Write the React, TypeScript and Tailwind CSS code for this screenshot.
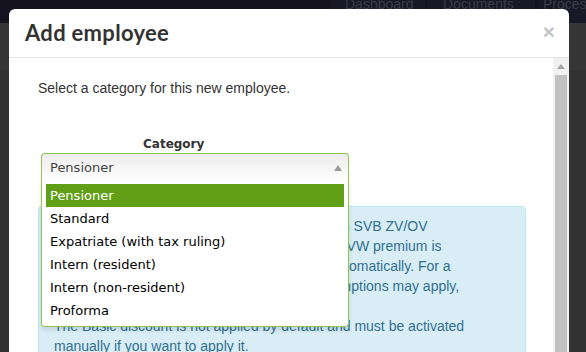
import React from 'react';

const options = [
  'Pensioner',
  'Standard',
  'Expatriate (with tax ruling)',
  'Intern (resident)',
  'Intern (non-resident)',
  'Proforma',
];

function Backdrop() {
  return (
    <div className="absolute inset-0 flex flex-col">
      <div className="h-[23px] bg-[#14131f] flex items-start justify-end overflow-hidden">
        <div className="flex h-full text-[14px] leading-[14px] text-[#3c3b4b] font-['Liberation_Sans',sans-serif]">
          <div className="w-[95px] pl-[15px] bg-[#191826] mr-[3px]"><span className="block -mt-[3px]">Dashboard</span></div>
          <div className="w-[107px] pl-[15px] bg-[#191826] mr-[3px]"><span className="block -mt-[3px]">Documents</span></div>
          <div className="w-[48px] pl-[5px] bg-[#191826] whitespace-nowrap overflow-hidden"><span className="block -mt-[3px]">Process</span></div>
        </div>
      </div>
      <div className="h-[47px] bg-[#363636]" />
      <div className="flex-1 bg-[#323232]" />
    </div>
  );
}

function CategorySelect() {
  return (
    <div className="relative ml-[3px] w-[308px]">
      <div className="h-[28px] border border-[#8fc651] border-b-0 rounded-t-[4px] bg-gradient-to-b from-[#ececec] to-white flex items-center justify-between pl-[8px] pr-[6px] text-[13px] text-[#444]">
        <span>Pensioner</span>
        <svg width="8" height="6" viewBox="0 0 8 6">
          <path d="M0 6 L4 0 L8 6 Z" fill="#999" />
        </svg>
      </div>
      <div className="absolute left-0 top-[27px] w-[308px] bg-white border border-[#8fc651] border-t-0 rounded-b-[4px] px-[4px] py-[4px] z-10 shadow-[0_3px_4px_rgba(0,0,0,0.1)]">
        {options.map((o, i) => (
          <div
            key={o}
            className={
              i === 0
                ? 'h-[23px] flex items-center px-[4px] bg-[#619f17] text-white'
                : 'h-[23px] flex items-center px-[4px] text-black'
            }
          >
            {o}
          </div>
        ))}
      </div>
    </div>
  );
}

export default function App() {
  return (
    <div className="relative w-[586px] h-[352px] overflow-hidden bg-[#333]">
      <Backdrop />
      <div className="absolute left-[9px] top-[9px] w-[560px] h-[360px] bg-white rounded-t-[6px] flex flex-col">
        <div className="h-[49px] shrink-0 border-b border-[#e5e5e5] flex items-center justify-between pl-[16px] pr-[14px]">
          <h1 className="text-[22px] font-bold text-[#333] font-['Lato',sans-serif] tracking-[0.3px] -mt-[1px]">Add employee</h1>
          <span className="text-[21px] font-bold leading-none text-[#c4c4c4] font-['Liberation_Sans',sans-serif] -mt-[4px]">×</span>
        </div>
        <div className="flex flex-1">
          <div className="flex-1 pl-[29px] pr-[27px] pt-[20px] font-['Liberation_Sans',sans-serif] text-[14px] leading-[20px] text-[#333]">
            <p>Select a category for this new employee.</p>
            <div className="mt-[38px] font-['DejaVu_Sans',sans-serif] text-[13px]">
              <div className="ml-[105px] font-bold text-[12px] text-[#333] leading-[16px]">Category</div>
              <div className="mt-[1px]">
                <CategorySelect />
              </div>
            </div>
            <div className="mt-[25px] bg-[#d9edf7] border border-[#bce8f1] rounded-[4px] pl-[15px] pr-[10px] pt-[9px] pb-[15px] text-[#31708f] whitespace-nowrap">
              <p>
                For pensioners no AOW premium is due and an SVB ZV/OV
                <br />
                is not applicable. Only the income-dependent ZVW premium is
                <br />
                due and will be calculated and withheld fully automatically. For a
                <br />
                pensioner with a modest pension, specific exemptions may apply,
                <br />
                please check with your advisor.
              </p>
              <p>
                The Basic discount is not applied by default and must be activated
                <br />
                manually if you want to apply it.
              </p>
            </div>
          </div>
          <div className="w-[16px] shrink-0 bg-[#f1f1f1] flex flex-col items-center">
            <div className="h-[17px] flex items-center justify-center">
              <svg width="8" height="5" viewBox="0 0 8 5">
                <path d="M0 5 L4 0 L8 5 Z" fill="#a3a3a3" />
              </svg>
            </div>
            <div className="w-[12px] flex-1 bg-[#c1c1c1]" />
          </div>
        </div>
      </div>
    </div>
  );
}
